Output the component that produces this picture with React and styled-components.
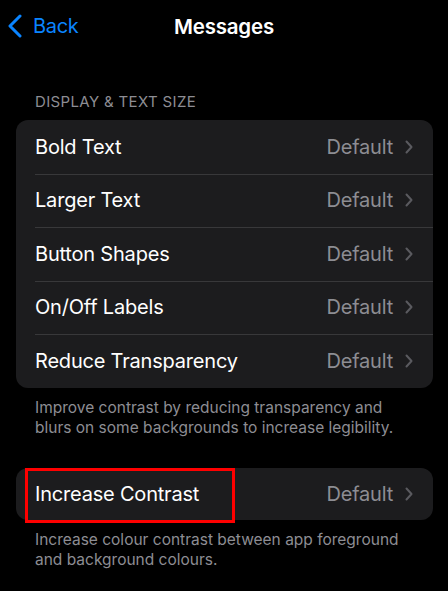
import React from "react";
import styled, { createGlobalStyle } from "styled-components";

const Global = createGlobalStyle`
  html, body { margin: 0; padding: 0; background: #000; }
  body { font-family: Inter, "Noto Sans", "Liberation Sans", sans-serif; -webkit-font-smoothing: antialiased; }
`;

const Screen = styled.div`
  width: 448px;
  min-height: 591px;
  background: #000;
  color: #fff;
  overflow: hidden;
`;

const NavBar = styled.div`
  display: grid;
  grid-template-columns: 1fr auto 1fr;
  align-items: center;
  height: 52px;
`;

const BackButton = styled.div`
  display: flex;
  align-items: center;
  gap: 11px;
  padding-left: 8px;
  color: #0a84ff;
  font-size: 20px;
  letter-spacing: -0.3px;
`;

const Title = styled.div`
  font-size: 20.5px;
  font-weight: 600;
  letter-spacing: -0.2px;
`;

const SectionHeader = styled.div`
  margin-top: 40px;
  padding-left: 35px;
  height: 20px;
  line-height: 20px;
  font-size: 15px;
  color: #8d8d93;
  letter-spacing: 0.35px;
  margin-bottom: 8px;
`;

const Card = styled.div`
  position: relative;
  margin: ${(p) => p.$top || 0}px 15px 0 16px;
  background: #1c1c1e;
  border-radius: 12px;
`;

const Row = styled.div`
  display: flex;
  align-items: center;
  height: ${(p) => p.$h || 53.5}px;
  padding-left: 19px;
  padding-right: 20px;
  position: relative;
  &:not(:first-child)::before {
    content: "";
    position: absolute;
    top: 0;
    left: 19px;
    right: 0;
    height: 1px;
    background: #38383a;
  }
`;

const Label = styled.div`
  flex: 1;
  font-size: 20px;
  letter-spacing: -0.2px;
  color: #fff;
`;

const Value = styled.div`
  font-size: 20px;
  letter-spacing: -0.2px;
  color: #8d8d93;
  margin-right: 12px;
`;

const Footer = styled.div`
  padding: 10px 20px 0 35px;
  font-size: 15.5px;
  line-height: 20px;
  color: #8d8d93;
`;

const Highlight = styled.div`
  position: absolute;
  left: 9px;
  top: 0;
  width: 210px;
  height: 55px;
  box-sizing: border-box;
  border: 3px solid #ff0000;
  pointer-events: none;
`;

const Chevron = () => (
  <svg width="8" height="14" viewBox="0 0 8 14" fill="none">
    <path d="M1.5 1.5 L6.5 7 L1.5 12.5" stroke="#5a5a5f" strokeWidth="2" strokeLinecap="round" strokeLinejoin="round" />
  </svg>
);

const BackChevron = () => (
  <svg width="14" height="24" viewBox="0 0 14 24" fill="none">
    <path d="M12 2 L2 12 L12 22" stroke="#0a84ff" strokeWidth="3" strokeLinecap="round" strokeLinejoin="round" />
  </svg>
);

const items = ["Bold Text", "Larger Text", "Button Shapes", "On/Off Labels", "Reduce Transparency"];

export default function App() {
  return (
    <Screen>
      <Global />
      <NavBar>
        <BackButton>
          <BackChevron />
          <span>Back</span>
        </BackButton>
        <Title>Messages</Title>
        <div />
      </NavBar>
      <SectionHeader>DISPLAY &amp; TEXT SIZE</SectionHeader>
      <Card>
        {items.map((t) => (
          <Row key={t}>
            <Label>{t}</Label>
            <Value>Default</Value>
            <Chevron />
          </Row>
        ))}
      </Card>
      <Footer>
        Improve contrast by reducing transparency and
        <br />
        blurs on some backgrounds to increase legibility.
      </Footer>
      <Card $top={30}>
        <Row $h={52}>
          <Label>Increase Contrast</Label>
          <Value>Default</Value>
          <Chevron />
        </Row>
        <Highlight />
      </Card>
      <Footer>
        Increase colour contrast between app foreground
        <br />
        and background colours.
      </Footer>
    </Screen>
  );
}
